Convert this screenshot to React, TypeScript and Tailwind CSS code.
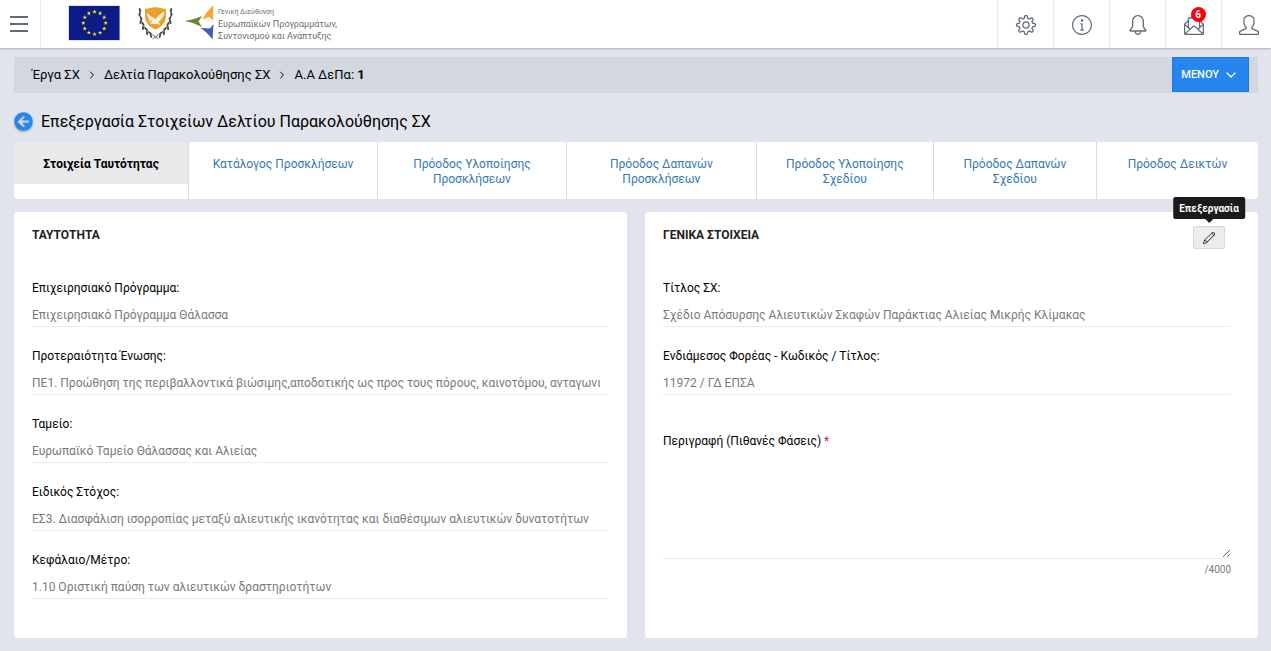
import type { ReactNode } from "react";
import { ChevronDown, ChevronRight } from "lucide-react";
import { FaArrowCircleLeft } from "react-icons/fa";
import { SlBell, SlEnvolopeLetter, SlInfo, SlPencil, SlSettings, SlUser } from "react-icons/sl";

const crumbs = ["Έργα ΣΧ", "Δελτία Παρακολούθησης ΣΧ"];

const tabs = [
  { label: "Στοιχεία Ταυτότητας", grow: "flex-[175]" },
  { label: "Κατάλογος Προσκλήσεων", grow: "flex-[189]" },
  { label: "Πρόοδος Υλοποίησης Προσκλήσεων", grow: "flex-[189]" },
  { label: "Πρόοδος Δαπανών Προσκλήσεων", grow: "flex-[190]" },
  { label: "Πρόοδος Υλοποίησης Σχεδίου", grow: "flex-[177]" },
  { label: "Πρόοδος Δαπανών Σχεδίου", grow: "flex-[163]" },
  { label: "Πρόοδος Δεικτών", grow: "flex-[162]" },
];

const identityFields = [
  { id: "programme", label: "Επιχειρησιακό Πρόγραμμα:", value: "Επιχειρησιακό Πρόγραμμα Θάλασσα" },
  {
    id: "priority",
    label: "Προτεραιότητα Ένωσης:",
    value:
      "ΠΕ1. Προώθηση της περιβαλλοντικά βιώσιμης,αποδοτικής ως προς τους πόρους, καινοτόμου, ανταγωνιστικής αλιείας",
  },
  { id: "fund", label: "Ταμείο:", value: "Ευρωπαϊκό Ταμείο Θάλασσας και Αλιείας" },
  {
    id: "objective",
    label: "Ειδικός Στόχος:",
    value: "ΕΣ3. Διασφάλιση ισορροπίας μεταξύ αλιευτικής ικανότητας και διαθέσιμων αλιευτικών δυνατοτήτων",
  },
  { id: "measure", label: "Κεφάλαιο/Μέτρο:", value: "1.10 Οριστική παύση των αλιευτικών δραστηριοτήτων" },
];

const generalFields = [
  {
    id: "title",
    label: "Τίτλος ΣΧ:",
    value: "Σχέδιο Απόσυρσης Αλιευτικών Σκαφών Παράκτιας Αλιείας Μικρής Κλίμακας",
  },
  { id: "body", label: "Ενδιάμεσος Φορέας - Κωδικός / Τίτλος:", value: "11972 / ΓΔ ΕΠΣΑ" },
];

const STAR = "M0 -2 L0.5 -0.65 L1.9 -0.6 L0.8 0.25 L1.2 1.6 L0 0.8 L-1.2 1.6 L-0.8 0.25 L-1.9 -0.6 L-0.5 -0.65 Z";

function EuFlag() {
  return (
    <svg width="52" height="36" viewBox="0 0 52 36" aria-hidden="true">
      <rect width="52" height="36" fill="#dfe3ee" />
      <rect x="1" y="1" width="50.5" height="34" fill="#0d1b86" />
      {Array.from({ length: 12 }, (_, i) => {
        const a = (i * Math.PI) / 6;
        return (
          <path
            key={i}
            d={STAR}
            fill="#f4e61a"
            transform={`translate(${26.5 + 11.2 * Math.sin(a)} ${18 - 11.2 * Math.cos(a)}) scale(1.15)`}
          />
        );
      })}
    </svg>
  );
}

const leaves = [
  [2, 5, -20],
  [1.6, 9, 10],
  [3, 13, -30],
  [2.6, 17, 10],
  [5, 19, -35],
  [5, 23, 5],
  [8, 24, -45],
  [9, 28, -10],
  [12, 28, -55],
  [13, 31, -20],
];

function Laurel() {
  return (
    <g>
      <path d="M1.5 3 C1.5 16 6 25 17 31.5" fill="none" stroke="#5d6650" strokeWidth="0.8" />
      {leaves.map(([x, y, r]) => (
        <ellipse key={`${x}-${y}`} cx={x} cy={y} rx="1" ry="2.2" fill="#444c3e" transform={`rotate(${r} ${x} ${y})`} />
      ))}
    </g>
  );
}

function CyprusEmblem() {
  return (
    <svg width="36" height="36" viewBox="0 0 36 36" aria-hidden="true">
      <Laurel />
      <g transform="translate(35 0) scale(-1 1)">
        <Laurel />
      </g>
      <path d="M14.5 34 L19 31 M20.5 34 L16 31" stroke="#5d6650" strokeWidth="0.9" />
      <path
        d="M7 4 Q12.500 3 17.500 2 Q22.500 3 28 4 L28 11 C28 18 23 22 17.500 24.500 C12 22 7 18 7 11 Z"
        fill="#e9a12c"
      />
      <path
        d="M8.500 7 C11 10 12 11 15 12.500 C16.500 13.300 17 14 17.500 14.500 C19 11 22 9 26.500 6.500 C26 11 23.500 14.500 20.500 17 C21.500 18 22 19 22 20 L18.500 18.500 C16 19.500 14 19.500 12 18 L14.500 17 C11 15 9 12 8.500 7 Z"
        fill="#f7f1e2"
      />
      <path d="M10.500 15 L13 18.500" stroke="#f7f1e2" strokeWidth="0.8" />
    </svg>
  );
}

function DirectorateLogo() {
  return (
    <a href="#" className="flex items-start gap-1 text-[#6c6d70]">
      <svg width="29" height="36" viewBox="0 0 29 36" aria-hidden="true">
        <path d="M28.500 0 L28 15.500 L24.500 12 L17 14.500 Q22 6 28.500 0 Z" fill="#f9a72b" />
        <path d="M0 16 Q9 14.500 17 11 L13.500 16.500 L17 22 Q9 17.500 0 16 Z" fill="#6b8a2f" />
        <path d="M28.500 19 L27.500 34.500 Q22 27 15.500 23 L25 23.500 Z" fill="#3f5ba9" />
      </svg>
      <span className="flex flex-col pt-px text-[9px] leading-[12px] whitespace-nowrap">
        <span className="text-[7px]">Γενική Διεύθυνση</span>
        <span>Ευρωπαϊκών Προγραμμάτων,</span>
        <span>Συντονισμού και Ανάπτυξης</span>
      </span>
    </a>
  );
}

function HeaderButton({ label, children }: { label: string; children: ReactNode }) {
  return (
    <button
      type="button"
      aria-label={label}
      className="flex w-14 items-center justify-center border-l border-[#e7e9ec] pt-[2px] last:w-[50px] last:justify-end last:pr-3"
    >
      {children}
    </button>
  );
}

function Header() {
  return (
    <header className="flex h-12 items-stretch bg-white text-[#5f6b76] shadow-[0_1px_2px_rgba(0,0,0,0.22)]">
      <button
        type="button"
        aria-label="Πλοήγηση"
        className="flex w-[41px] flex-col justify-center gap-[5px] border-r border-[#e7e9ec] pl-[10px]"
      >
        <span className="h-[2px] w-[18px] bg-current" />
        <span className="h-[2px] w-[18px] bg-current" />
        <span className="h-[2px] w-[18px] bg-current" />
      </button>
      <div className="flex items-start pt-[5px] pl-[27px]">
        <EuFlag />
        <div className="pr-[11px] pl-[18px]">
          <CyprusEmblem />
        </div>
        <DirectorateLogo />
      </div>
      <nav className="ml-auto flex">
        <HeaderButton label="Ρυθμίσεις">
          <SlSettings className="size-5" />
        </HeaderButton>
        <HeaderButton label="Πληροφορίες">
          <SlInfo className="size-5" />
        </HeaderButton>
        <HeaderButton label="Ειδοποιήσεις">
          <SlBell className="size-5" />
        </HeaderButton>
        <HeaderButton label="Μηνύματα">
          <span className="relative">
            <SlEnvolopeLetter className="size-5" />
            <span className="absolute -top-2 left-[7px] flex size-[15px] items-center justify-center rounded-full bg-[#fb0007] text-[10px] font-bold text-white">
              6
            </span>
          </span>
        </HeaderButton>
        <HeaderButton label="Προφίλ">
          <SlUser className="size-5" />
        </HeaderButton>
      </nav>
    </header>
  );
}

function Breadcrumbs() {
  return (
    <div className="flex h-9 items-center bg-[#d3d7e0] pr-[9px] pl-[18px] text-[13px]">
      <nav className="flex items-center gap-[6px]">
        {crumbs.map((c) => (
          <span key={c} className="flex items-center gap-[6px]">
            <a href="#">{c}</a>
            <ChevronRight className="size-3" />
          </span>
        ))}
        <span>
          Α.Α ΔεΠα: <b>1</b>
        </span>
      </nav>
      <button
        type="button"
        className="ml-auto flex h-[35px] items-center gap-1 self-start border border-[#1f78e0] bg-[#2686f0] pt-px pr-[9px] pl-2 text-[11px] font-medium text-white"
      >
        ΜΕΝΟΥ
        <ChevronDown className="size-4" />
      </button>
    </div>
  );
}

function Tabs() {
  return (
    <nav className="flex h-[57px] overflow-hidden rounded-sm bg-white text-center text-[12px] leading-[15px]">
      {tabs.map((t, i) => (
        <div key={t.label} className={`${t.grow} border-l border-[#dcdcdf] first:border-l-0`}>
          <a
            href="#"
            className={
              i === 0
                ? "block bg-[#e9e8eb] px-4 pt-[15px] pb-3 font-bold text-black"
                : "block px-5 pt-[15px] text-[#337ab7]"
            }
          >
            {t.label}
          </a>
        </div>
      ))}
    </nav>
  );
}

function Field({ id, label, value }: { id: string; label: string; value: string }) {
  return (
    <div className="mb-5 flex flex-col">
      <label htmlFor={id} className="mb-[5px] leading-[18px]">
        {label}
      </label>
      <input
        id={id}
        readOnly
        defaultValue={value}
        className="h-[25px] w-full border-b border-[#ececec] pt-[2px] pr-2 text-[#777b7d] outline-none"
      />
    </div>
  );
}

export default function App() {
  return (
    <div className="min-h-screen bg-[#e1e4ec] pb-[13px] font-[Roboto,sans-serif] text-[12px] text-black">
      <Header />
      <main className="pt-[9px] pr-[13px] pl-[14px]">
        <Breadcrumbs />
        <div className="flex h-[49px] items-center gap-2 pt-2">
          <a href="#" aria-label="Πίσω" className="rounded-full text-[#2686f0] drop-shadow-[0_1px_1px_rgba(0,0,0,0.3)]">
            <FaArrowCircleLeft className="size-[19px]" />
          </a>
          <h1 className="pt-px text-[16px]">Επεξεργασία Στοιχείων Δελτίου Παρακολούθησης ΣΧ</h1>
        </div>
        <Tabs />
        <div className="mt-[13px] grid grid-cols-2 gap-[18px]">
          <section className="rounded-sm bg-white pt-[14px] pr-[19px] pb-[19px] pl-[18px]">
            <h2 className="mb-[35px] leading-[18px] font-bold text-[#222]">ΤΑΥΤΟΤΗΤΑ</h2>
            {identityFields.map((f) => (
              <Field key={f.id} {...f} />
            ))}
          </section>
          <section className="rounded-sm bg-white pt-[14px] pr-[27px] pb-[19px] pl-[18px]">
            <div className="mb-[30px] flex items-start justify-between pr-[6px]">
              <h2 className="leading-[18px] font-bold text-[#222]">ΓΕΝΙΚΑ ΣΤΟΙΧΕΙΑ</h2>
              <div className="relative">
                <button
                  type="button"
                  aria-label="Επεξεργασία"
                  className="flex h-[23px] w-8 items-center justify-center rounded-xs border border-[#d8d8d8] bg-[#ececec] text-[#333]"
                >
                  <SlPencil className="size-3" />
                </button>
                <div className="absolute bottom-full left-1/2 mb-[7px] flex h-[22px] -translate-x-1/2 items-center rounded-xs bg-[#1b1b1b] px-[6px] text-[10px] font-bold text-white">
                  Επεξεργασία
                  <span className="absolute top-full left-1/2 -translate-x-1/2 border-x-4 border-t-4 border-x-transparent border-t-[#1b1b1b]" />
                </div>
              </div>
            </div>
            {generalFields.map((f) => (
              <Field key={f.id} {...f} />
            ))}
            <div className="mt-[37px] flex flex-col">
              <label htmlFor="description" className="mb-[5px] leading-[18px]">
                Περιγραφή (Πιθανές Φάσεις) <span className="text-[#e02222]">*</span>
              </label>
              <textarea id="description" className="h-[104px] w-full resize-y border-b border-[#ececec] outline-none" />
              <span className="mt-1 text-right text-[10px] leading-[14px] text-[#777b7d]">/4000</span>
            </div>
          </section>
        </div>
      </main>
    </div>
  );
}
